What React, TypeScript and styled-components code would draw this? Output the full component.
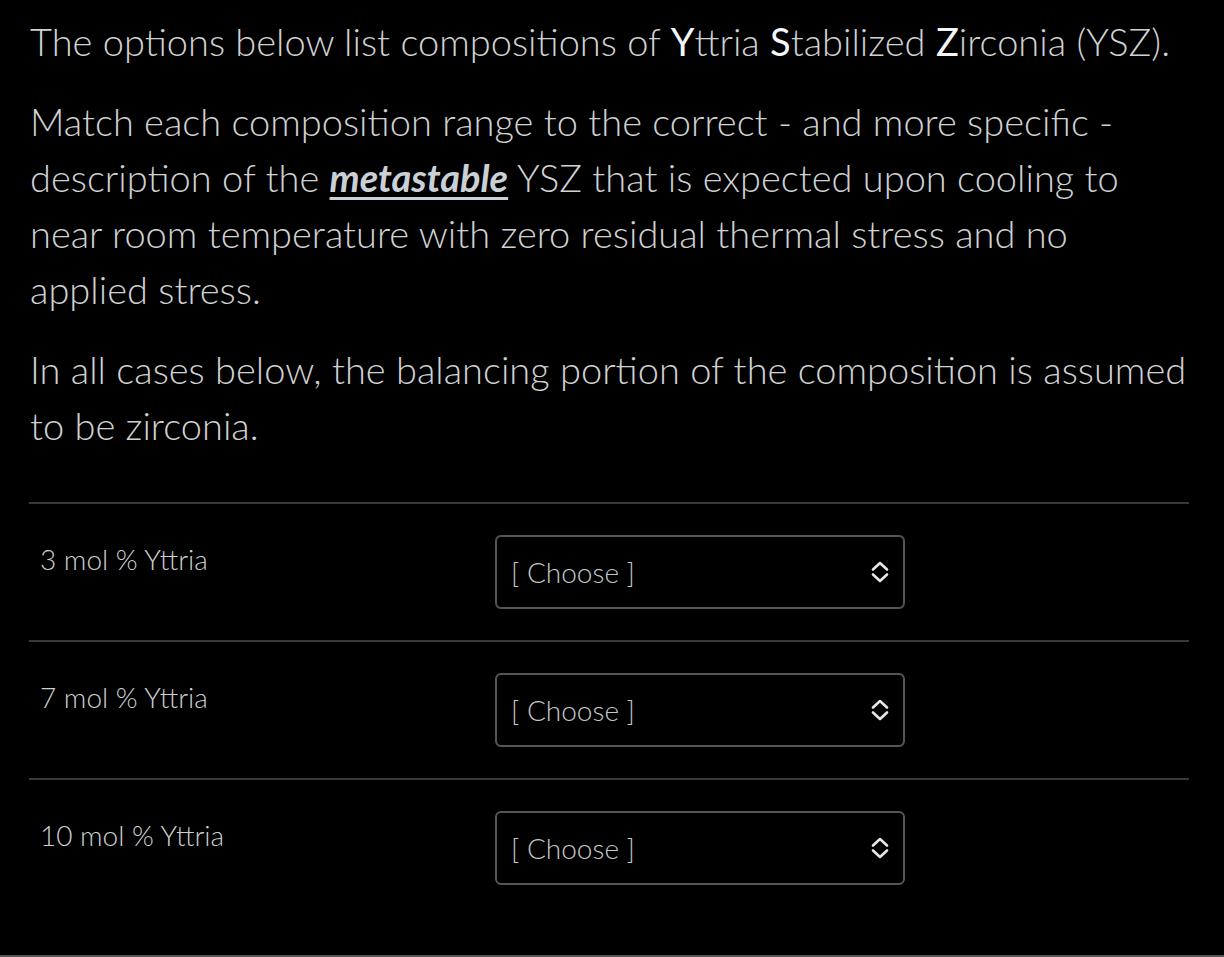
import React from "react";
import styled, { createGlobalStyle } from "styled-components";

const Global = createGlobalStyle`
  html, body { margin: 0; padding: 0; background: #000; }
  body { font-family: "Lato Light", Lato, "Open Sans", sans-serif; color: #cfd1d3; }
`;

const Page = styled.div`
  box-sizing: border-box;
  width: 1224px;
  height: 957px;
  padding: 13px 35px 0 30px;
  background: #000;
  border-bottom: 2px solid #555;
  overflow: hidden;
`;

const Para = styled.p`
  margin: 0 0 24px 0;
  font-family: "Lato Light", Lato, sans-serif;
  font-size: 38px;
  font-weight: 300;
  line-height: 56px;
  color: #cfd1d3;
`;

const Strong = styled.span`
  font-family: Lato, sans-serif;
  font-weight: 400;
  color: #f4f6f8;
`;

const Emph = styled.span`
  font-family: Lato, sans-serif;
  font-weight: 700;
  font-style: italic;
  text-decoration: underline;
  text-decoration-thickness: 3px;
  text-underline-offset: 5px;
  color: #c9d0d6;
`;

const Table = styled.div`
  margin-top: 49px;
  margin-left: -1px;
  width: 1160px;
`;

const Row = styled.div`
  display: grid;
  grid-template-columns: 466px 410px;
  border-top: 2px solid #383838;
  padding: 31px 0 31px 0;
  box-sizing: border-box;
  height: 138px;
`;

const Label = styled.div`
  padding: 4px 0 0 11px;
  font-family: "Lato Light", Lato, sans-serif;
  font-size: 28px;
  font-weight: 300;
  line-height: 40px;
  color: #cdcfd1;
`;

const Select = styled.div`
  box-sizing: border-box;
  height: 74px;
  border: 2px solid #565656;
  border-radius: 6px;
  display: flex;
  align-items: center;
  justify-content: space-between;
  padding: 0 13px 0 14px;
  font-family: "Lato Light", Lato, sans-serif;
  font-size: 28px;
  font-weight: 300;
  color: #c6c8ca;
`;

const Chevrons = () => (
  <svg width="20" height="26" viewBox="0 0 20 26" fill="none">
    <polyline points="3,10.5 10,4 17,10.5" stroke="#e4e6e8" strokeWidth="2.6" strokeLinecap="round" strokeLinejoin="round" />
    <polyline points="3,15.5 10,22 17,15.5" stroke="#e4e6e8" strokeWidth="2.6" strokeLinecap="round" strokeLinejoin="round" />
  </svg>
);

const rows = ["3 mol % Yttria", "7 mol % Yttria", "10 mol % Yttria"];

export default function App() {
  return (
    <>
      <Global />
      <Page>
        <Para>
          The options below list compositions of <Strong>Y</Strong>ttria <Strong>S</Strong>tabilized{" "}
          <Strong>Z</Strong>irconia (YSZ).
        </Para>
        <Para>
          Match each composition range to the correct - and more specific - description of the{" "}
          <Emph>metastable</Emph> YSZ that is expected upon cooling to near room temperature with zero
          residual thermal stress and no applied stress.
        </Para>
        <Para>
          In all cases below, the balancing portion of the composition is assumed to be zirconia.
        </Para>
        <Table>
          {rows.map((r) => (
            <Row key={r}>
              <Label>{r}</Label>
              <Select>
                <span>[ Choose ]</span>
                <Chevrons />
              </Select>
            </Row>
          ))}
        </Table>
      </Page>
    </>
  );
}
